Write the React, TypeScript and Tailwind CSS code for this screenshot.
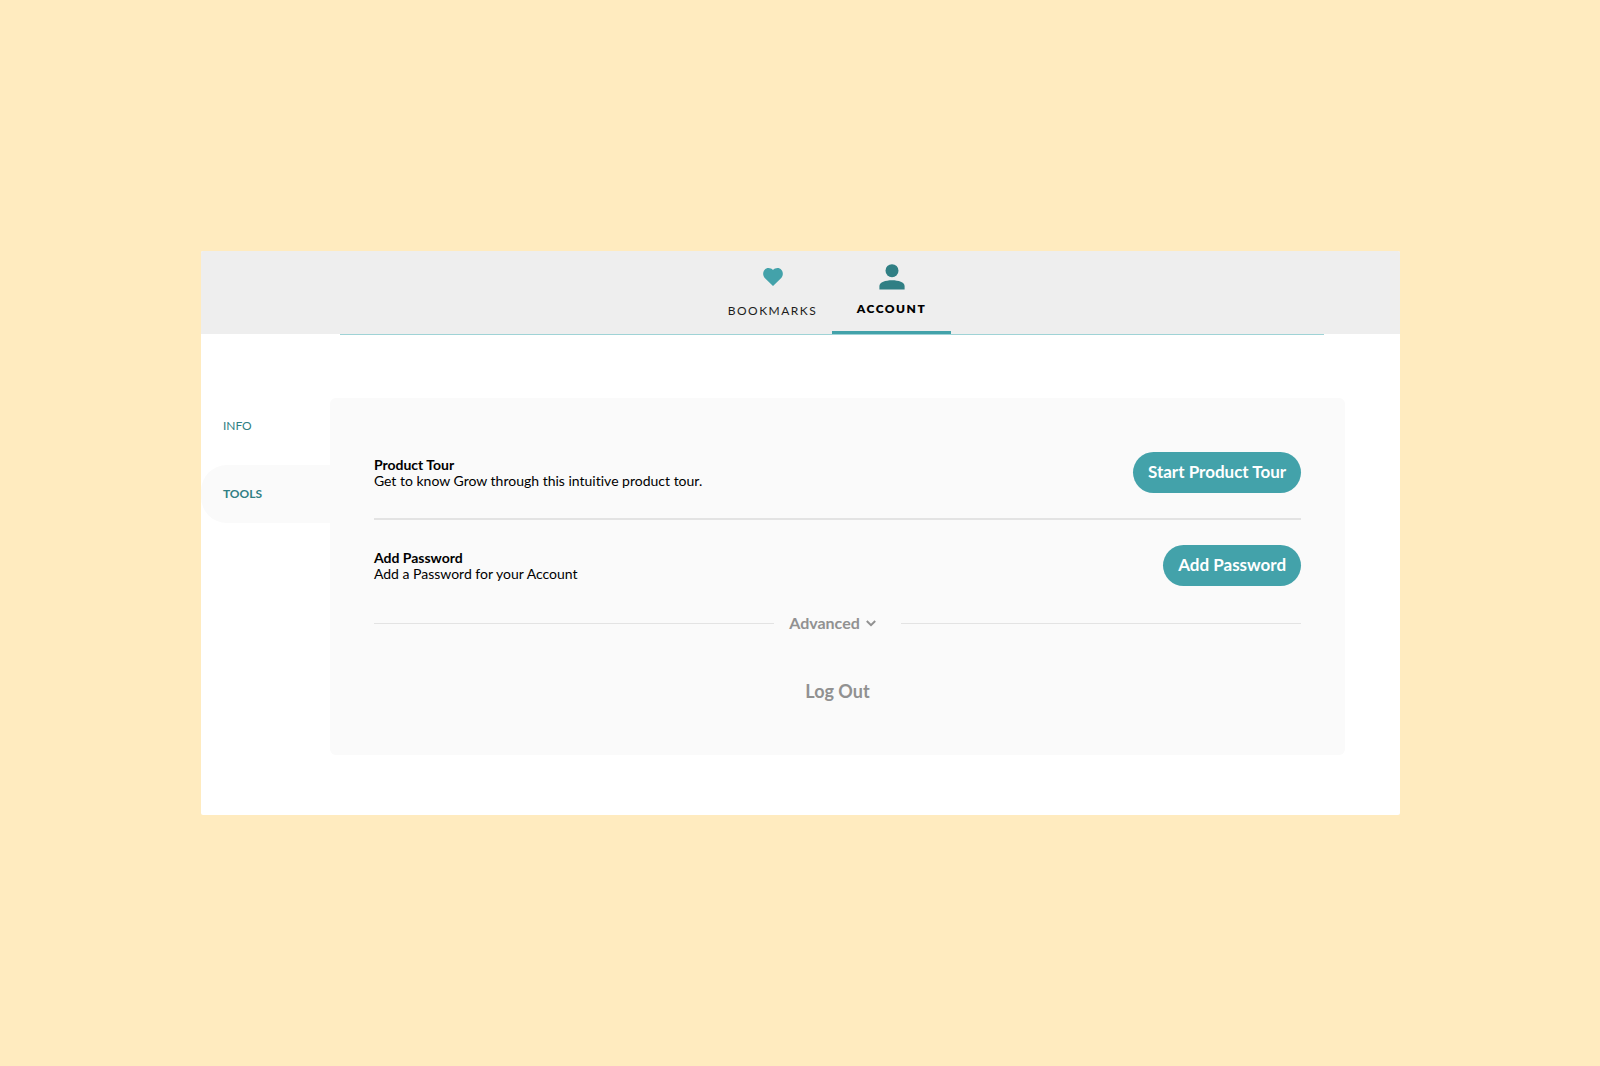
const tools = [
  {
    title: 'Product Tour',
    text: 'Get to know Grow through this intuitive product tour.',
    action: 'Start Product Tour',
  },
  {
    title: 'Add Password',
    text: 'Add a Password for your Account',
    action: 'Add Password',
  },
]

function HeartIcon() {
  return (
    <svg viewBox="0 0 20 18" className="w-5 h-[18px]" fill="#43a2aa" aria-hidden="true">
      <path d="M10 18 2 10.2C-.4 7.800-.3 4 1.500 1.900 3.800-.6 7.600-.4 10 2.100c2.400-2.500 6.200-2.700 8.500-.2 1.800 2.100 1.900 5.900-.5 8.300Z" />
    </svg>
  )
}

function PersonIcon() {
  return (
    <svg viewBox="0 0 26 26" className="w-[26px] h-[26px]" fill="#307f84" aria-hidden="true">
      <circle cx="13" cy="6.700" r="6.500" />
      <path d="M.4 25.500V22c0-3.600 6-5.700 12.600-5.700S25.600 18.400 25.600 22v3.500Z" />
    </svg>
  )
}

function Header() {
  return (
    <header className="h-[83px] bg-[#eeeeee] pl-[139px] pr-[76px]">
      <nav className="flex justify-center h-[84px] border-b border-[#9fd3d6]">
        <a href="#bookmarks" className="w-[119px] flex flex-col items-center pt-[17px]">
          <HeartIcon />
          <span className="mt-[17px] text-xs leading-4 tracking-[1.5px] text-[#1c1c1c]">BOOKMARKS</span>
        </a>
        <a href="#account" className="w-[119px] flex flex-col items-center pt-[13px] border-b-3 border-[#43a2aa]">
          <PersonIcon />
          <span className="mt-[11px] text-xs leading-4 tracking-[1.5px] font-extrabold text-black">ACCOUNT</span>
        </a>
      </nav>
    </header>
  )
}

function Sidebar() {
  return (
    <nav className="w-[129px] shrink-0 text-xs text-[#307f84]">
      <a href="#info" className="flex items-center h-14 pl-[22px] mb-[11px]">INFO</a>
      <a href="#tools" className="flex items-center h-[58px] pl-[22px] rounded-l-[26px] bg-[#fafafa] font-bold">TOOLS</a>
    </nav>
  )
}

export default function App() {
  return (
    <div className="min-h-screen flex items-center justify-center pl-px bg-[#ffebbf] font-['Lato',sans-serif] [font-variant-ligatures:none]">
      <div className="w-3/4 rounded-xs overflow-hidden bg-white">
        <Header />
        <div className="flex pt-16 pb-[60px] pr-[55px]">
          <Sidebar />
          <main className="flex-1 rounded-md bg-[#fafafa] px-11 pt-[54px] pb-[52px]">
            <section className="divide-y-2 divide-[#e3e3e3]">
              {tools.map((tool) => (
                <div key={tool.title} className="flex items-center justify-between pb-[25px] not-first:pt-[25px]">
                  <div className="text-sm leading-4 text-black">
                    <h2 className="font-bold">{tool.title}</h2>
                    <p>{tool.text}</p>
                  </div>
                  <button className="h-[41px] px-[15px] pb-0.5 rounded-full bg-[#43a2aa] text-[17px] font-bold text-white">
                    {tool.action}
                  </button>
                </div>
              ))}
            </section>
            <div className="flex items-center text-[#919191]">
              <div className="flex-1 h-px bg-[#e3e3e3]" />
              <button className="flex items-center gap-1.5 pl-[15px] pr-[25px] text-base leading-6 font-bold">
                Advanced
                <svg viewBox="0 0 10 7" className="w-2.5 h-[7px]" fill="none" stroke="currentColor" strokeWidth="2" aria-hidden="true">
                  <path d="m.8 1 4.200 4.200L9.200 1" />
                </svg>
              </button>
              <div className="flex-1 h-px bg-[#e3e3e3]" />
            </div>
            <button className="block mx-auto mt-11 text-lg leading-6 font-bold text-[#919191]">Log Out</button>
          </main>
        </div>
      </div>
    </div>
  )
}
